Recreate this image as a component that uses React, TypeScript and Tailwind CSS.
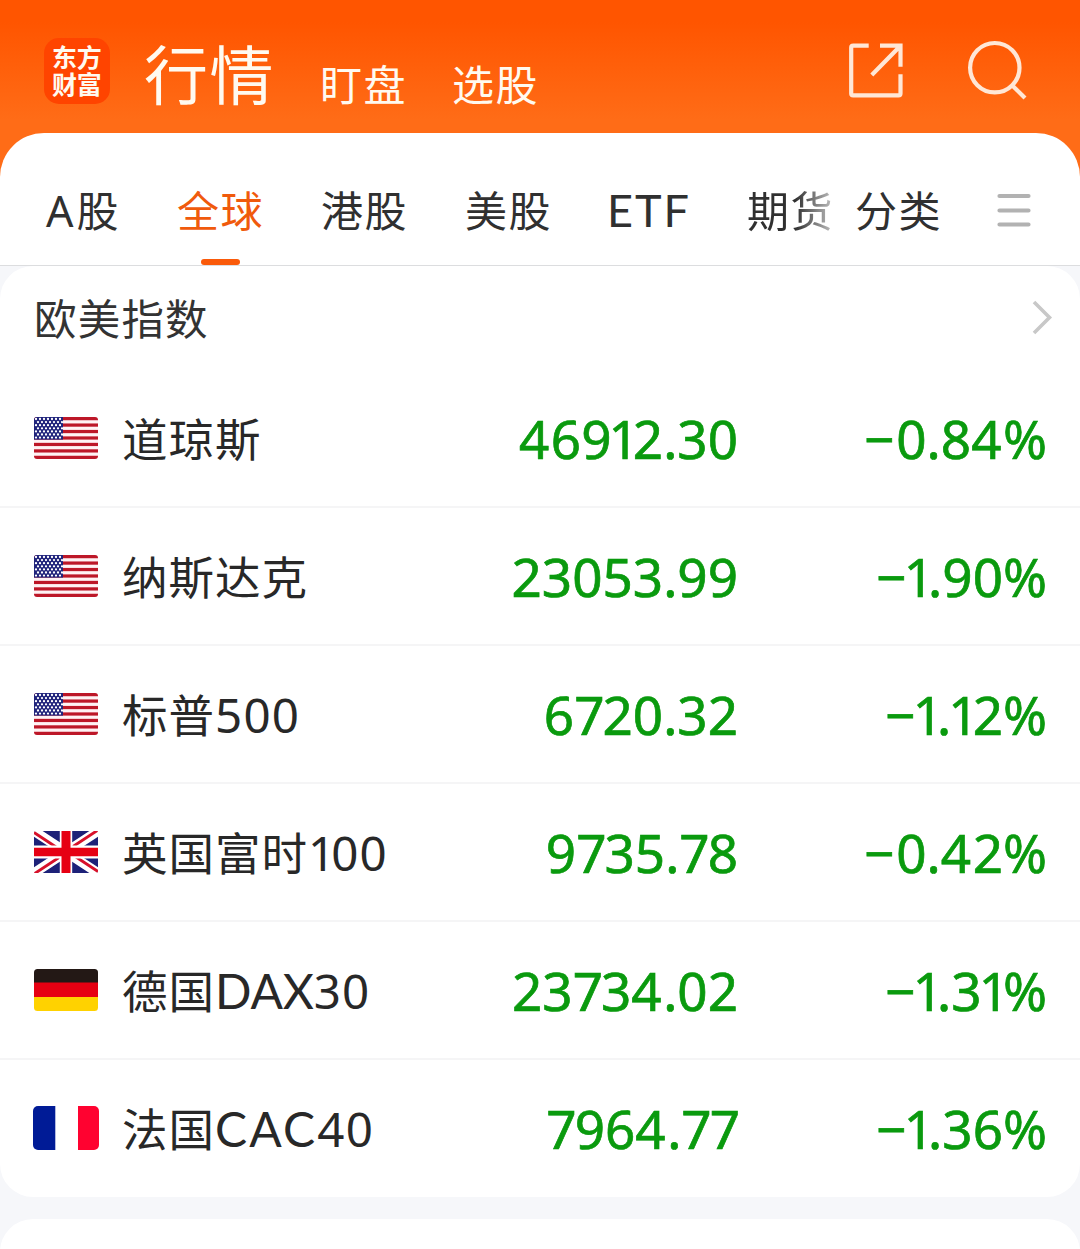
import React from "react";

type FlagKind = "us" | "gb" | "de" | "fr";

interface IndexRow {
  flag: FlagKind;
  name: string;
  letters?: string;
  lettersClass?: string;
  digits?: string;
  price: string;
  change: string;
}

const rows: IndexRow[] = [
  { flag: "us", name: "道琼斯", price: "46912.30", change: "−0.84%" },
  { flag: "us", name: "纳斯达克", price: "23053.99", change: "−1.90%" },
  { flag: "us", name: "标普", digits: "500", price: "6720.32", change: "−1.12%" },
  { flag: "gb", name: "英国富时", digits: "100", price: "9735.78", change: "−0.42%" },
  { flag: "de", name: "德国", letters: "DAX", lettersClass: "tracking-[-0.2px]", digits: "30", price: "23734.02", change: "−1.31%" },
  { flag: "fr", name: "法国", letters: "CAC", lettersClass: "tracking-[2.2px]", digits: "40", price: "7964.77", change: "−1.36%" },
];

/* Proportional figures: narrow "1" and "7", slightly wide "4". */
function Figures({ value }: { value: string }) {
  const chars = value.split("");
  return (
    <>
      {chars.map((ch, i) => {
        const beforeOne = chars[i + 1] === "1";
        let tracking = beforeOne ? "tracking-[-3px]" : "tracking-[0px]";
        if (ch === "1") tracking = "tracking-[-6px]";
        else if (ch === "7") tracking = "tracking-[-2px]";
        else if (ch === "4") tracking = "tracking-[1.5px]";
        else if (ch === "−") tracking = beforeOne ? "tracking-[-2.5px]" : "tracking-[2px]";
        return <span key={i} className={tracking}>{ch}</span>;
      })}
    </>
  );
}

function UsFlag() {
  const stars = [];
  for (let r = 0; r < 7; r++) {
    for (let c = 0; c < 7; c++) {
      stars.push(
        <circle key={`${r}-${c}`} cx={(r % 2 ? 4 : 2) + c * 4} cy={2 + r * 3.1} r="1.15" fill="#fff" />,
      );
    }
  }
  return (
    <svg width="66" height="44" viewBox="-1 -1 66 44">
      <clipPath id="us-clip"><rect width="64" height="42" rx="3" /></clipPath>
      <clipPath id="us-canton"><rect width="29" height="22.6" /></clipPath>
      <g clipPath="url(#us-clip)">
        <rect width="64" height="42" fill="#fff2f4" />
        {[0, 1, 2, 3, 4, 5, 6].map((i) => (
          <rect key={i} y={i * 6.46} width="64" height="3.23" fill="#bd1728" />
        ))}
        <rect width="29" height="22.6" fill="#20247c" />
        <g clipPath="url(#us-canton)">{stars}</g>
      </g>
    </svg>
  );
}

function GbFlag() {
  return (
    <svg width="66" height="44" viewBox="-1 -1 66 44">
      <clipPath id="gb-clip"><rect width="64" height="42" rx="1" /></clipPath>
      <g clipPath="url(#gb-clip)">
        <rect width="64" height="42" fill="#1d2178" />
        <path d="M0 0L64 42M64 0L0 42" stroke="#fff" strokeWidth="9.5" />
        <path d="M0 1.5L22 16M64 -1L39 15.5M64 40.5L42 26M0 43L25 26.5" stroke="#d7112a" strokeWidth="2.8" />
        <path d="M32 0V42" stroke="#fff" strokeWidth="12.4" />
        <path d="M0 21H64" stroke="#fff" strokeWidth="13" />
        <path d="M32 0V42" stroke="#e60013" strokeWidth="9" />
        <path d="M0 21H64" stroke="#e60013" strokeWidth="8.6" />
      </g>
    </svg>
  );
}

function DeFlag() {
  return (
    <svg width="66" height="44" viewBox="-1 -1 66 44">
      <clipPath id="de-clip"><rect width="64" height="42" rx="3.5" /></clipPath>
      <g clipPath="url(#de-clip)">
        <rect width="64" height="14" fill="#231815" />
        <rect y="13.5" width="64" height="15" fill="#e60012" />
        <rect y="28" width="64" height="14" fill="#ffd200" />
      </g>
    </svg>
  );
}

function FrFlag() {
  return (
    <svg width="66" height="44" viewBox="0 0 66 44">
      <clipPath id="fr-clip"><rect width="66" height="44" rx="5" /></clipPath>
      <g clipPath="url(#fr-clip)">
        <rect width="66" height="44" fill="#fff" />
        <rect width="22.3" height="44" fill="#001b96" />
        <rect x="45" width="21" height="44" fill="#ff0230" />
      </g>
    </svg>
  );
}

const flags: Record<FlagKind, () => React.JSX.Element> = { us: UsFlag, gb: GbFlag, de: DeFlag, fr: FrFlag };

function Header() {
  return (
    <header className="flex h-[133px] items-start text-[#fffaf0]">
      <div className="ml-11 mt-[38px] h-[66px] w-[66px] rounded-[15px] bg-[#ff4400] pl-2 pr-[6px] pt-[6px] text-[25px] font-bold leading-[27px] tracking-[-0.3px]">
        东方财富
      </div>
      <span className="ml-[34px] mt-[35px] w-[134px] whitespace-nowrap text-[64px] leading-[80px] tracking-[1.5px]">行情</span>
      <span className="ml-[42px] mt-[60px] w-[88px] whitespace-nowrap text-[42px] leading-[50px] tracking-[1.4px]">盯盘</span>
      <span className="ml-[44px] mt-[60px] w-[88px] whitespace-nowrap text-[42px] leading-[50px] tracking-[1.4px]">选股</span>
      <svg className="ml-auto mt-[40px]" width="60" height="60" viewBox="846 40 60 60" fill="none" stroke="#ffe7d6" strokeWidth="4.2">
        <path d="M868.7 45.7H853.2Q851.2 45.7 851.2 47.7V93.4Q851.2 95.4 853.2 95.4H898.5Q900.5 95.4 900.5 93.4V74.3" />
        <path d="M880 45.7H900.5V66.7M900 46.2L871.8 75" />
      </svg>
      <svg className="ml-[58px] mr-[51px] mt-[38px]" width="65" height="64" viewBox="964 38 65 64" fill="none" stroke="#ffe7d6" strokeWidth="4.2">
        <circle cx="994.8" cy="67.7" r="24.7" />
        <path d="M1011.8 85L1025 98" />
      </svg>
    </header>
  );
}

function Tabs() {
  return (
    <nav className="flex h-[133px] items-start whitespace-nowrap rounded-t-[44px] border-b border-[#dcdddf] bg-white pt-[53px] text-[42px] leading-[50px] tracking-[1.4px] text-[#303030]">
      <span className="ml-[46px] w-[131px]"><span className="text-[43px] tracking-[3px]">A</span>股</span>
      <div className="flex w-[144px] flex-col">
        <span className="text-[#f05a0c]">全球</span>
        <span className="ml-6 mt-[23px] h-[6px] w-[39px] rounded-full bg-[#fa5a0a]" />
      </div>
      <span className="w-[144px]">港股</span>
      <span className="w-[140px]">美股</span>
      <span className="-mt-px w-[142px] pl-[2px] font-['Lato'] text-[45px] tracking-[2px]">ETF</span>
      <span className="w-[108px] bg-[linear-gradient(90deg,#303030_48px,#d0d0d0_90px)] bg-clip-text text-transparent">期货</span>
      <span className="w-[141px]">分类</span>
      <svg className="mt-[6px]" width="36" height="36" viewBox="0 0 36 36" stroke="#b2b2b2" strokeWidth="4.2" strokeLinecap="round">
        <path d="M3.5 4H32.5M3.5 18.5H32.5M3.5 32.5H32.5" />
      </svg>
    </nav>
  );
}

function Row({ row, last }: { row: IndexRow; last: boolean }) {
  const Flag = flags[row.flag];
  return (
    <li className={"flex h-[138px] items-center whitespace-nowrap pl-[33px] pr-[33px] " + (last ? "pb-[2px]" : "border-b-2 border-[#f5f5f6]")}>
      <Flag />
      <span className="ml-[23px] w-[330px] pt-[2px] text-[45.5px] leading-[60px] tracking-[1px] text-[#282828]">
        {row.name}
        {row.letters && <span className="font-['Lato'] text-[48px]"><span className={row.lettersClass}>{row.letters}</span></span>}
        {row.digits && (
          <span className="text-[47.5px] tracking-[1.2px]">
            {row.digits.startsWith("1") ? (
              <><span className="tracking-[-4px]">1</span>{row.digits.slice(1)}</>
            ) : row.digits}
          </span>
        )}
      </span>
      <span className="w-[286px] pt-px text-right text-[53px] leading-[60px] text-[#0a9a0e] [-webkit-text-stroke:0.7px_#0a9a0e]">
        <Figures value={row.price} />
      </span>
      <span className="ml-auto pt-px text-right text-[53px] leading-[60px] text-[#0a9a0e] [-webkit-text-stroke:0.7px_#0a9a0e]">
        <Figures value={row.change} />
      </span>
    </li>
  );
}

export default function App() {
  return (
    <div className="flex h-[1249px] w-[1080px] flex-col overflow-hidden bg-[#f6f7fa] font-['Noto_Sans','Noto_Sans_CJK_SC',sans-serif]">
      <div className="bg-[linear-gradient(180deg,#ff5500_0px,#ff5500_22px,#ff6c17_120px,#ff6c17_180px,#f6f7fa_180px)]">
        <Header />
        <Tabs />
      </div>
      <section className="h-[931px] shrink-0 rounded-[33px] bg-white">
        <div className="flex h-[104px] items-center justify-between pl-[34px] pr-[27px]">
          <h2 className="pt-[2px] text-[42.5px] leading-[50px] tracking-[1.2px] text-[#333]">欧美指数</h2>
          <svg width="22" height="36" viewBox="0 0 22 36" fill="none" stroke="#c8c8c8" strokeWidth="3.6">
            <path d="M3 2L18.5 17.5L3 33" />
          </svg>
        </div>
        <ul>
          {rows.map((row, i) => (
            <Row key={row.name} row={row} last={i === rows.length - 1} />
          ))}
        </ul>
      </section>
      <section className="mt-[22px] h-[60px] shrink-0 rounded-t-[33px] bg-white" />
    </div>
  );
}
